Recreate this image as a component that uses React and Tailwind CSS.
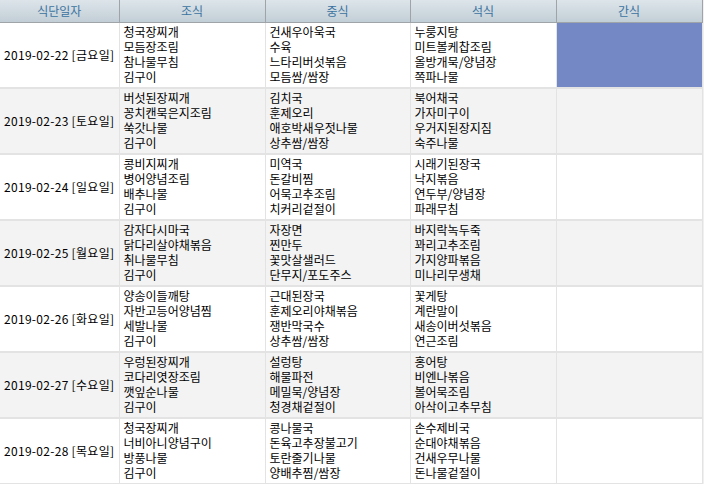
const days = [
  {
    date: '2019-02-22 [금요일]',
    b: ['청국장찌개', '모듬장조림', '참나물무침', '김구이'],
    l: ['건새우아욱국', '수육', '느타리버섯볶음', '모듬쌈/쌈장'],
    d: ['누룽지탕', '미트볼케찹조림', '올방개묵/양념장', '쪽파나물'],
    snack: true,
  },
  {
    date: '2019-02-23 [토요일]',
    b: ['버섯된장찌개', '꽁치캔묵은지조림', '쑥갓나물', '김구이'],
    l: ['김치국', '훈제오리', '애호박새우젓나물', '상추쌈/쌈장'],
    d: ['북어채국', '가자미구이', '우거지된장지짐', '숙주나물'],
  },
  {
    date: '2019-02-24 [일요일]',
    b: ['콩비지찌개', '병어양념조림', '배추나물', '김구이'],
    l: ['미역국', '돈갈비찜', '어묵고추조림', '치커리겉절이'],
    d: ['시래기된장국', '낙지볶음', '연두부/양념장', '파래무침'],
  },
  {
    date: '2019-02-25 [월요일]',
    b: ['감자다시마국', '닭다리살야채볶음', '취나물무침', '김구이'],
    l: ['자장면', '찐만두', '꽃맛살샐러드', '단무지/포도주스'],
    d: ['바지락녹두죽', '꽈리고추조림', '가지양파볶음', '미나리무생채'],
  },
  {
    date: '2019-02-26 [화요일]',
    b: ['양송이들깨탕', '자반고등어양념찜', '세발나물', '김구이'],
    l: ['근대된장국', '훈제오리야채볶음', '쟁반막국수', '상추쌈/쌈장'],
    d: ['꽃게탕', '계란말이', '새송이버섯볶음', '연근조림'],
  },
  {
    date: '2019-02-27 [수요일]',
    b: ['우렁된장찌개', '코다리엿장조림', '깻잎순나물', '김구이'],
    l: ['설렁탕', '해물파전', '메밀묵/양념장', '청경채겉절이'],
    d: ['홍어탕', '비엔나볶음', '볼어묵조림', '아삭이고추무침'],
  },
  {
    date: '2019-02-28 [목요일]',
    b: ['청국장찌개', '너비아니양념구이', '방풍나물', '김구이'],
    l: ['콩나물국', '돈육고추장불고기', '토란줄기나물', '양배추찜/쌈장'],
    d: ['손수제비국', '순대야채볶음', '건새우무나물', '돈나물겉절이'],
  },
];

const headers = ['식단일자', '조식', '중식', '석식', '간식'];

// one text block per cell, lines split by newline
function Menu({ items }) {
  return (
    <div className="pl-[4px] pt-[1px] leading-[15px] whitespace-pre-line">
      {items.join('\n')}
    </div>
  );
}

export default function App() {
  return (
    <div
      className="w-[704px] h-[484px] overflow-hidden bg-[#f0f0f0] flex text-[12px] text-black"
      style={{ fontFamily: '"Noto Sans CJK KR", "Noto Sans", sans-serif' }}
    >
      <table className="border-collapse table-fixed w-[702px] shrink-0">
        <colgroup>
          <col className="w-[119px]" />
          <col className="w-[146px]" />
          <col className="w-[145px]" />
          <col className="w-[146px]" />
          <col className="w-[146px]" />
        </colgroup>
        <thead>
          <tr className="h-[22px]">
            {headers.map((h) => (
              <th
                key={h}
                className="p-0 font-normal text-[12px] text-[#3b73a0] bg-gradient-to-b from-[#dde5ea] to-[#c2ced6] border-b border-r border-[#9ea4a8] leading-[21px]"
              >
                {h}
              </th>
            ))}
          </tr>
        </thead>
        <tbody>
          {days.map((d, i) => (
            <tr key={d.date} className={`h-[66px] ${i % 2 ? 'bg-[#f3f3f3]' : 'bg-white'}`}>
              <td className="p-0 pl-[4px] align-middle border-r border-b-2 border-[#e3e3e3] whitespace-nowrap tracking-[0.3px]">
                {d.date}
              </td>
              <td className="p-0 align-top border-r border-b-2 border-[#e3e3e3]">
                <Menu items={d.b} />
              </td>
              <td className="p-0 align-top border-r border-b-2 border-[#e3e3e3]">
                <Menu items={d.l} />
              </td>
              <td className="p-0 align-top border-r border-b-2 border-[#e3e3e3]">
                <Menu items={d.d} />
              </td>
              <td
                className={`p-0 border-r border-b-2 border-[#e3e3e3] ${d.snack ? 'bg-[#7588c6]' : ''}`}
              />
            </tr>
          ))}
        </tbody>
      </table>
    </div>
  );
}
